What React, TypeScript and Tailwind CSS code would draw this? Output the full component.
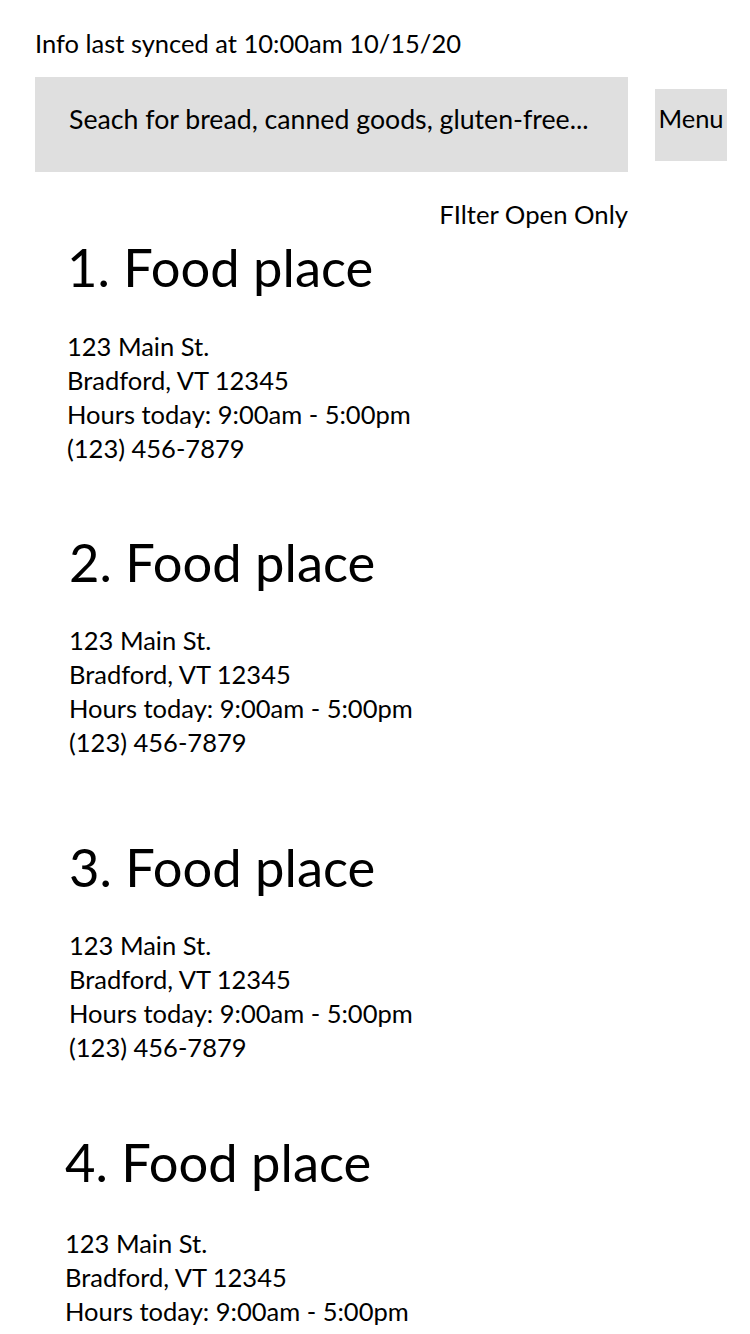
const places = [
  { n: 1, top: "mt-[9px]", gap: "mt-[36px]", left: "pl-[67px]" },
  { n: 2, top: "mt-[70px]", gap: "mt-[35px]", left: "pl-[69px]" },
  { n: 3, top: "mt-[81px]", gap: "mt-[35px]", left: "pl-[69px]" },
  { n: 4, top: "mt-[71px]", gap: "mt-[38px]", left: "pl-[65px]" },
];

function Place({ n, top, gap, left }: { n: number; top: string; gap: string; left: string }) {
  return (
    <section className={`${top} ${left}`}>
      <h2 className="text-[52.5px] leading-[53px] font-normal">{n}. Food place</h2>
      <div className={`${gap} text-[25.5px] leading-[34px]`}>
        <p>123 Main St.</p>
        <p>Bradford, VT 12345</p>
        <p>Hours today: 9:00am - 5:00pm</p>
        <p>(123) 456-7879</p>
      </div>
    </section>
  );
}

export default function App() {
  return (
    <div className="w-[750px] min-h-[1334px] bg-white text-black font-['Lato',sans-serif]">
      {/* sync info */}
      <p className="pl-[35px] pt-[26px] text-[25.5px] leading-[34px]">
        Info last synced at 10:00am 10/15/20
      </p>

      {/* search + menu */}
      <div className="mt-[17px] pl-[35px] flex items-start gap-[27px]">
        <div className="w-[593px] h-[95px] bg-[#dfdfdf] pl-[34px] pt-[25px] text-[26.7px] leading-[34px] whitespace-nowrap">
          Seach for bread, canned goods, gluten-free...
        </div>
        <div className="mt-[12px] w-[72px] h-[72px] bg-[#dfdfdf] pt-[12px] text-center text-[25.5px] leading-[34px]">
          Menu
        </div>
      </div>

      <p className="mt-[25px] w-[628px] text-right text-[25.7px] leading-[34px]">
        FIlter Open Only
      </p>

      {places.map((p) => (
        <Place key={p.n} {...p} />
      ))}
    </div>
  );
}
